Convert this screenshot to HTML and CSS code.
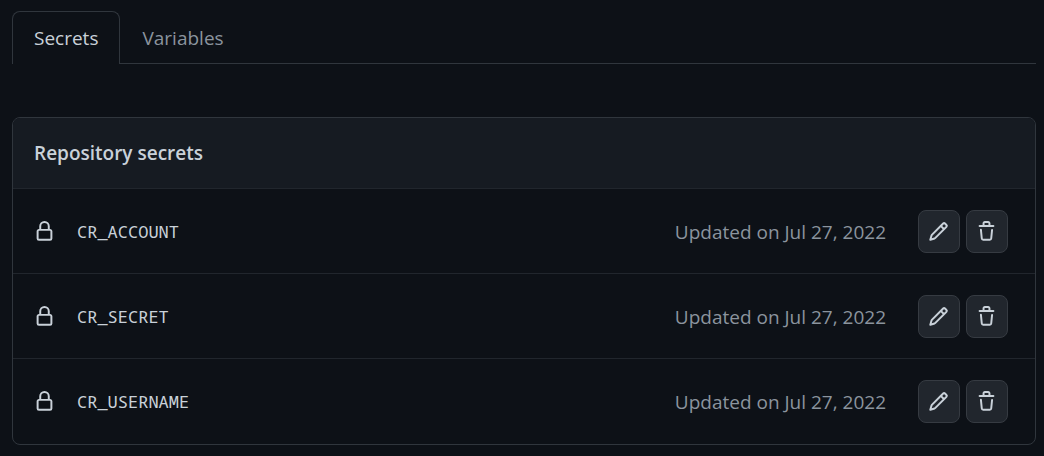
FILE: index.html
```
<!DOCTYPE html>
<html lang="en">
<head>
<meta charset="utf-8">
<meta name="viewport" content="width=device-width, initial-scale=1">
<title>Repository secrets</title>
<link rel="stylesheet" href="styles.css">
</head>
<body>
<svg class="sprite" aria-hidden="true">
  <symbol id="lock" viewBox="0 0 16 16"><path d="M4 4a4 4 0 0 1 8 0v2h.25c.966 0 1.75.784 1.75 1.75v5.5A1.75 1.75 0 0 1 12.25 15h-8.5A1.75 1.75 0 0 1 2 13.25v-5.5C2 6.784 2.784 6 3.75 6H4Zm8.25 3.5h-8.5a.25.25 0 0 0-.25.25v5.5c0 .138.112.25.25.25h8.5a.25.25 0 0 0 .25-.25v-5.5a.25.25 0 0 0-.25-.25ZM10.5 6V4a2.5 2.5 0 1 0-5 0v2Z"/></symbol>
  <symbol id="pencil" viewBox="0 0 16 16"><path d="M11.013 1.427a1.75 1.75 0 0 1 2.474 0l1.086 1.086a1.75 1.75 0 0 1 0 2.474l-8.61 8.61c-.21.21-.47.364-.756.445l-3.251.93a.75.75 0 0 1-.927-.928l.929-3.25c.081-.286.235-.547.445-.758l8.61-8.61Zm.176 4.823L9.75 4.81l-6.286 6.287a.253.253 0 0 0-.064.108l-.558 1.953 1.953-.558a.253.253 0 0 0 .108-.064Zm1.238-3.763a.25.25 0 0 0-.354 0L10.811 3.75l1.439 1.44 1.263-1.263a.25.25 0 0 0 0-.354Z"/></symbol>
  <symbol id="trash" viewBox="0 0 16 16"><path d="M11 1.75V3h2.25a.75.75 0 0 1 0 1.5H2.75a.75.75 0 0 1 0-1.5H5V1.75C5 .784 5.784 0 6.75 0h2.5C10.216 0 11 .784 11 1.75ZM4.496 6.675l.66 6.6a.25.25 0 0 0 .249.225h5.19a.25.25 0 0 0 .249-.225l.66-6.6a.75.75 0 0 1 1.492.149l-.66 6.6A1.748 1.748 0 0 1 10.595 15h-5.19a1.75 1.75 0 0 1-1.741-1.575l-.66-6.6a.75.75 0 1 1 1.492-.15ZM6.5 1.75V3h3V1.75a.25.25 0 0 0-.25-.25h-2.5a.25.25 0 0 0-.25.25Z"/></symbol>
</svg>
<main class="page">
  <nav class="tabs" aria-label="Secrets and variables">
    <a class="tab tab-active" href="#secrets" aria-current="page">Secrets</a>
    <a class="tab" href="#variables">Variables</a>
    <span class="tabs-rule"></span>
  </nav>
  <section class="box" id="secrets">
    <h2 class="box-header">Repository secrets</h2>
    <ul class="rows">
      <li class="row">
        <svg class="icon"><use href="#lock"/></svg>
        <code class="name">CR_ACCOUNT</code>
        <span class="updated">Updated on Jul 27, 2022</span>
        <div class="actions">
          <button class="btn" type="button" aria-label="Edit CR_ACCOUNT"><svg class="icon"><use href="#pencil"/></svg></button>
          <button class="btn" type="button" aria-label="Remove CR_ACCOUNT"><svg class="icon"><use href="#trash"/></svg></button>
        </div>
      </li>
      <li class="row">
        <svg class="icon"><use href="#lock"/></svg>
        <code class="name">CR_SECRET</code>
        <span class="updated">Updated on Jul 27, 2022</span>
        <div class="actions">
          <button class="btn" type="button" aria-label="Edit CR_SECRET"><svg class="icon"><use href="#pencil"/></svg></button>
          <button class="btn" type="button" aria-label="Remove CR_SECRET"><svg class="icon"><use href="#trash"/></svg></button>
        </div>
      </li>
      <li class="row">
        <svg class="icon"><use href="#lock"/></svg>
        <code class="name">CR_USERNAME</code>
        <span class="updated">Updated on Jul 27, 2022</span>
        <div class="actions">
          <button class="btn" type="button" aria-label="Edit CR_USERNAME"><svg class="icon"><use href="#pencil"/></svg></button>
          <button class="btn" type="button" aria-label="Remove CR_USERNAME"><svg class="icon"><use href="#trash"/></svg></button>
        </div>
      </li>
    </ul>
  </section>
</main>
</body>
</html>
```
FILE: styles.css
```
* {
  box-sizing: border-box;
}

body {
  margin: 0;
  background: #0d1117;
  color: #c9d1d9;
  font: 19px/28px "Open Sans", "Noto Sans", sans-serif;
}

.sprite {
  display: none;
}

.page {
  padding: 11px 8px 11px 12px;
}

.tabs {
  display: flex;
  margin-bottom: 53px;
}

.tab {
  padding: 13px 22px 11px;
  border-bottom: 1px solid #30363d;
  color: #8b949e;
  text-decoration: none;
}

.tab-active {
  padding: 12px 21px 12px;
  border: 1px solid #30363d;
  border-bottom: 0;
  border-radius: 8px 8px 0 0;
  color: #c9d1d9;
}

.tabs-rule {
  flex: 1;
  border-bottom: 1px solid #30363d;
}

.box {
  border: 1px solid #30363d;
  border-radius: 8px;
  overflow: hidden;
}

.box-header {
  margin: 0;
  padding: 21px;
  background: #161b22;
  font-size: 19px;
  font-weight: 600;
}

.rows {
  margin: 0;
  padding: 0;
  list-style: none;
}

.row {
  display: flex;
  align-items: center;
  padding: 21px 27px 20px 21px;
  border-top: 1px solid #21262d;
}

.row:last-child {
  padding-bottom: 21px;
}

.icon {
  display: block;
  width: 21px;
  height: 21px;
  fill: currentColor;
}

.name {
  flex: 1;
  padding-left: 22px;
  font: 17px/28px "Noto Sans Mono", "DejaVu Sans Mono", monospace;
}

.updated {
  color: #8b949e;
}

.actions {
  display: flex;
  gap: 6px;
  margin-left: 32px;
}

.btn {
  padding: 10px 10px 10px 9px;
  border: 1px solid #363b42;
  border-radius: 8px;
  background: #21262d;
  color: #c9d1d9;
}
```
